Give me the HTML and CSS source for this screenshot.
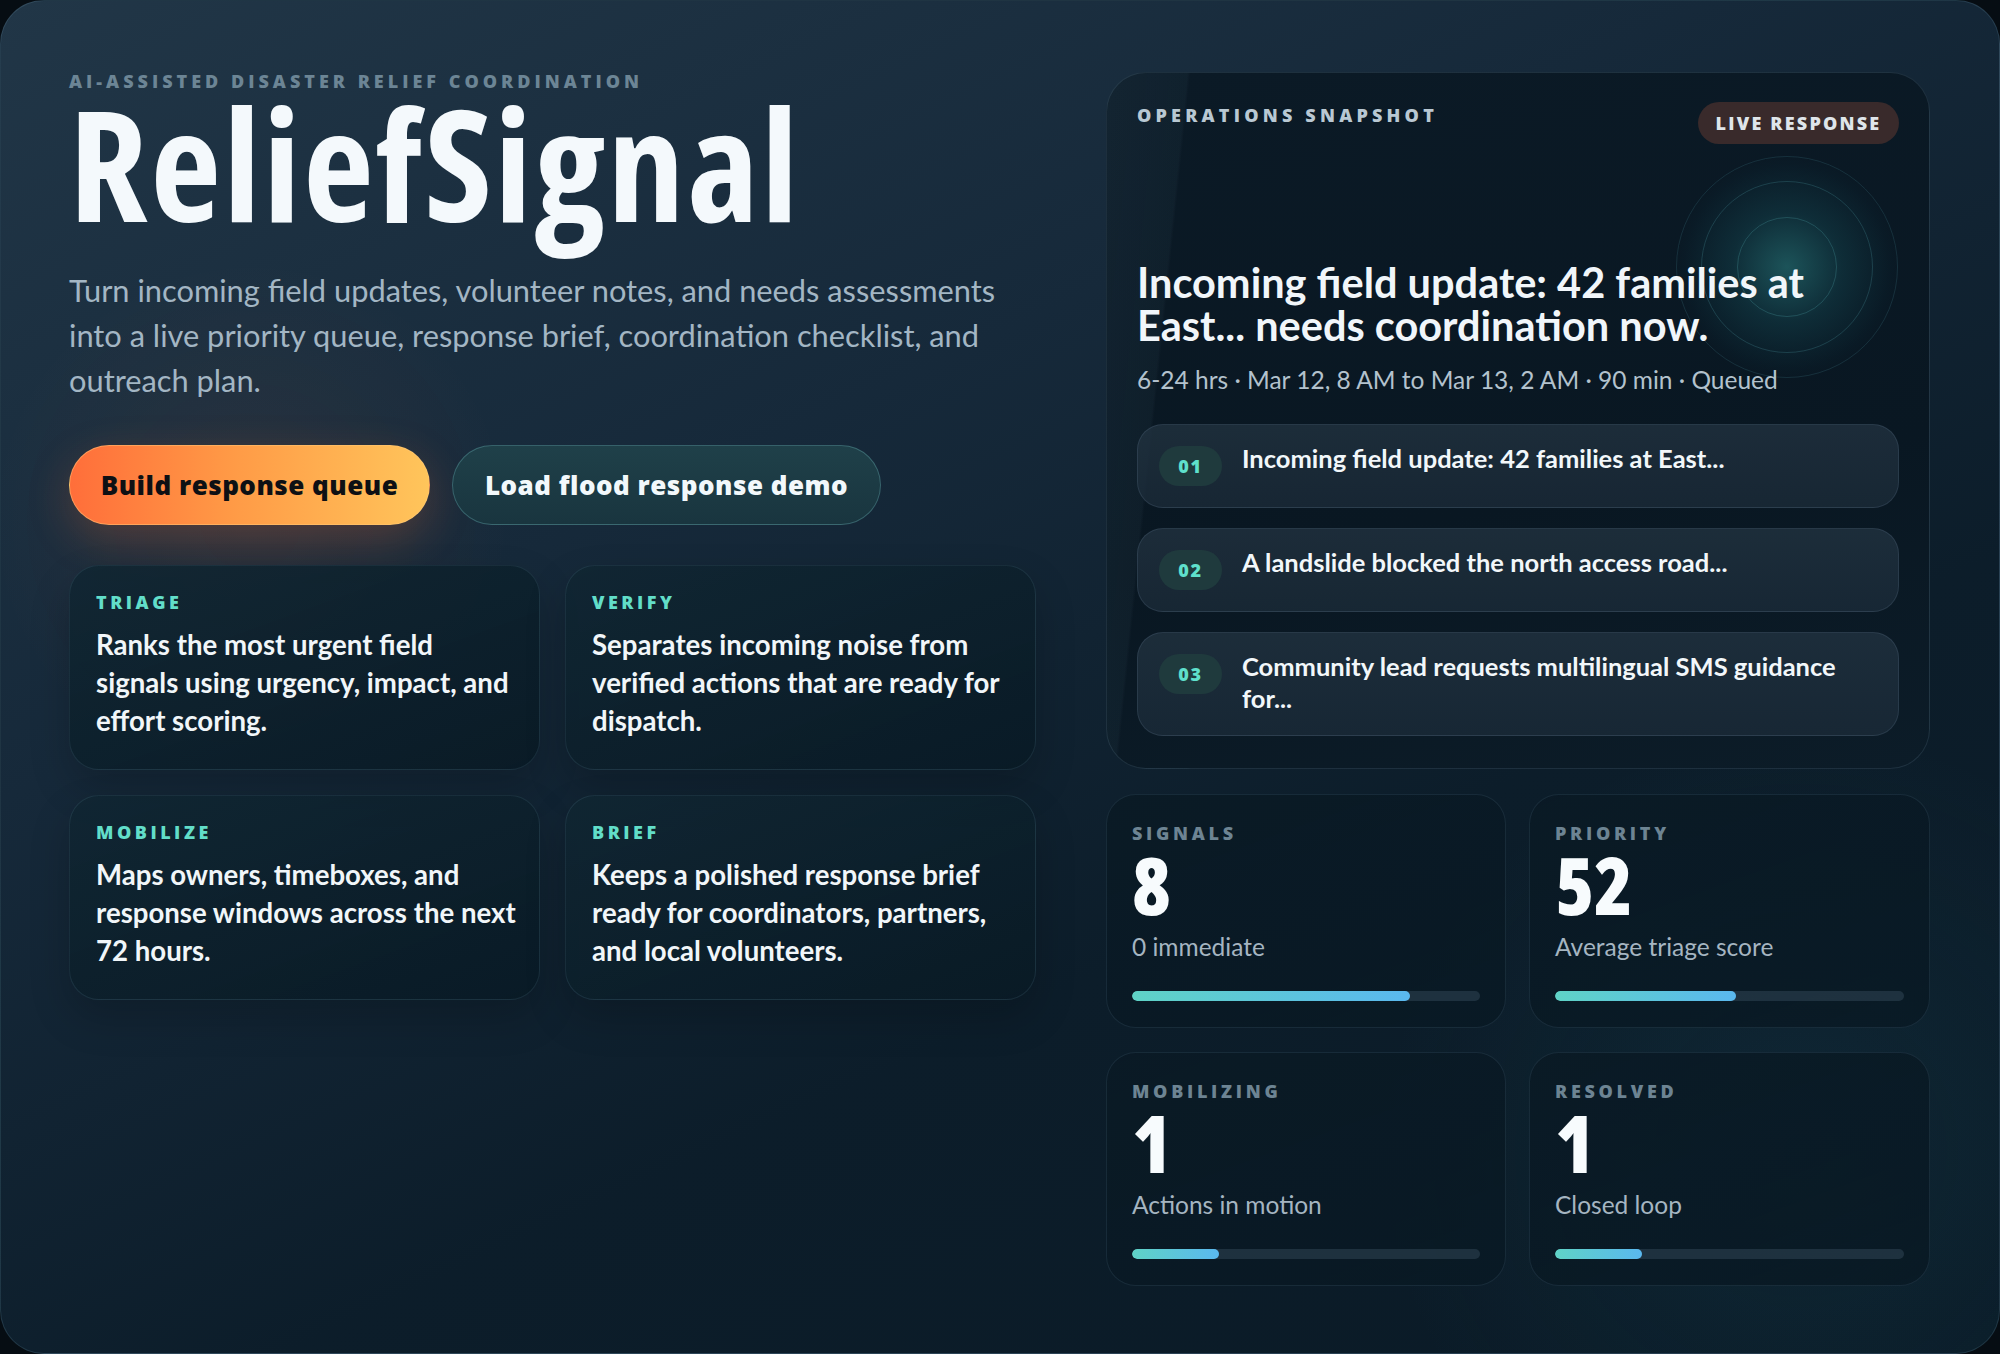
FILE: index.html
```html
<!DOCTYPE html>
<html lang="en">
<head>
<meta charset="utf-8">
<title>ReliefSignal</title>
<link rel="stylesheet" href="styles.css">
</head>
<body>
<main class="frame">
  <section class="intro">
    <p class="eyebrow">AI-assisted disaster relief coordination</p>
    <h1 class="title">ReliefSignal</h1>
    <p class="lede">Turn incoming field updates, volunteer notes, and needs assessments into a live priority queue, response brief, coordination checklist, and outreach plan.</p>
    <div class="actions">
      <button class="btn btn-primary">Build response queue</button>
      <button class="btn btn-secondary">Load flood response demo</button>
    </div>
    <div class="features">
      <article class="feature">
        <h2 class="feature-label">Triage</h2>
        <p class="feature-text">Ranks the most urgent field<br>signals using urgency, impact, and<br>effort scoring.</p>
      </article>
      <article class="feature">
        <h2 class="feature-label">Verify</h2>
        <p class="feature-text">Separates incoming noise from<br>verified actions that are ready for<br>dispatch.</p>
      </article>
      <article class="feature">
        <h2 class="feature-label">Mobilize</h2>
        <p class="feature-text">Maps owners, timeboxes, and<br>response windows across the next<br>72 hours.</p>
      </article>
      <article class="feature">
        <h2 class="feature-label">Brief</h2>
        <p class="feature-text">Keeps a polished response brief<br>ready for coordinators, partners,<br>and local volunteers.</p>
      </article>
    </div>
  </section>

  <aside class="side">
    <section class="snapshot">
      <div class="radar" aria-hidden="true">
        <span class="ring ring-1"></span>
        <span class="ring ring-2"></span>
        <span class="ring ring-3"></span>
      </div>
      <header class="snap-head">
        <p class="snap-label">Operations snapshot</p>
        <span class="pill">Live response</span>
      </header>
      <h2 class="snap-title">Incoming field update: 42 families at<br>East... needs coordination now.</h2>
      <p class="snap-meta">6-24 hrs · Mar 12, 8 AM to Mar 13, 2 AM · 90 min · Queued</p>
      <ol class="queue">
        <li class="queue-item"><span class="badge">01</span><span class="queue-text">Incoming field update: 42 families at East...</span></li>
        <li class="queue-item"><span class="badge">02</span><span class="queue-text">A landslide blocked the north access road...</span></li>
        <li class="queue-item"><span class="badge">03</span><span class="queue-text">Community lead requests multilingual SMS guidance<br>for...</span></li>
      </ol>
    </section>

    <section class="stats">
      <article class="stat">
        <h3 class="stat-label">Signals</h3>
        <p class="stat-value">8</p>
        <p class="stat-sub">0 immediate</p>
        <div class="bar"><span class="fill" style="width:80%"></span></div>
      </article>
      <article class="stat">
        <h3 class="stat-label">Priority</h3>
        <p class="stat-value">52</p>
        <p class="stat-sub">Average triage score</p>
        <div class="bar"><span class="fill" style="width:52%"></span></div>
      </article>
      <article class="stat">
        <h3 class="stat-label">Mobilizing</h3>
        <p class="stat-value">1</p>
        <p class="stat-sub">Actions in motion</p>
        <div class="bar"><span class="fill" style="width:25%"></span></div>
      </article>
      <article class="stat">
        <h3 class="stat-label">Resolved</h3>
        <p class="stat-value">1</p>
        <p class="stat-sub">Closed loop</p>
        <div class="bar"><span class="fill" style="width:25%"></span></div>
      </article>
    </section>
  </aside>
</main>
</body>
</html>
```

FILE: styles.css
```css
* { box-sizing: border-box; }

html, body {
  margin: 0;
  padding: 0;
  background: #060d13;
}

body {
  width: 2000px;
  height: 1354px;
  overflow: hidden;
  font-family: "Lato", "Noto Sans", sans-serif;
  color: #eef5fa;
}

p, h1, h2, h3, ol { margin: 0; padding: 0; }

.frame {
  width: 2000px;
  height: 1354px;
  border-radius: 44px;
  border: 1px solid rgba(120, 165, 190, 0.18);
  background:
    radial-gradient(circle at 250px 520px, rgba(255, 120, 60, 0.07), transparent 260px),
    radial-gradient(circle at 1800px 1150px, rgba(40, 110, 130, 0.14), transparent 420px),
    linear-gradient(155deg, #213647 0%, #16293a 35%, #0c1d2a 65%, #0a1a26 100%);
  display: grid;
  grid-template-columns: 968px 824px;
  column-gap: 69px;
  padding: 70px 0 0 68px;
  overflow: hidden;
}

/* shared label style */
.eyebrow,
.feature-label,
.snap-label,
.pill,
.stat-label,
.badge {
  font-family: "Open Sans", "DejaVu Sans", sans-serif;
  font-weight: 800;
  text-transform: uppercase;
}

/* ---------- left column ---------- */
.eyebrow {
  font-size: 18px;
  line-height: 20px;
  letter-spacing: 4px;
  color: #6c8595;
}

.title {
  font-family: "Open Sans", "Liberation Sans", sans-serif;
  font-stretch: 75%;
  font-size: 154px;
  line-height: 142px;
  font-weight: 700;
  letter-spacing: 2.5px;
  color: #f4f9fc;
}

.lede {
  margin-top: 35px;
  width: 950px;
  font-size: 30.8px;
  line-height: 45px;
  font-weight: 400;
  color: #a3b6c4;
}

.actions {
  margin-top: 42px;
  display: flex;
  gap: 22px;
}

.btn {
  height: 80px;
  border-radius: 40px;
  font-family: "Open Sans", "DejaVu Sans", sans-serif;
  font-size: 26px;
  font-weight: 800;
  letter-spacing: 0.5px;
  padding: 0;
  cursor: pointer;
}

.btn-primary {
  width: 361px;
  border: 1px solid rgba(255, 200, 120, 0.5);
  color: #0e1014;
  background: linear-gradient(90deg, #ff6e3a 0%, #ff9a46 45%, #ffc55b 100%);
  box-shadow: 0 14px 44px rgba(255, 110, 50, 0.22);
}

.btn-secondary {
  width: 429px;
  border: 1px solid rgba(110, 180, 185, 0.35);
  color: #f2f8fb;
  background: linear-gradient(180deg, #1f4049 0%, #19353f 100%);
}

.features {
  margin-top: 40px;
  display: grid;
  grid-template-columns: 471px 471px;
  grid-auto-rows: 205px;
  column-gap: 25px;
  row-gap: 25px;
}

.feature {
  border-radius: 30px;
  border: 1px solid rgba(120, 170, 190, 0.13);
  background: linear-gradient(160deg, rgba(16, 38, 50, 0.85), rgba(9, 26, 37, 0.9));
  box-shadow: 0 18px 40px rgba(0, 0, 0, 0.18);
  padding: 26px 16px 0 26px;
}

.feature-label {
  font-size: 18px;
  line-height: 20px;
  letter-spacing: 3.5px;
  color: #62dec9;
}

.feature-text {
  margin-top: 14px;
  font-size: 27.6px;
  line-height: 38px;
  font-weight: 700;
  white-space: nowrap;
  color: #f1f6f9;
}

/* ---------- right column ---------- */
.side {
  display: flex;
  flex-direction: column;
  gap: 25px;
  margin-top: 1px;
}

.snapshot {
  position: relative;
  height: 697px;
  border-radius: 40px;
  border: 1px solid rgba(130, 170, 195, 0.16);
  background:
    linear-gradient(96deg, rgba(120, 160, 185, 0.08) 0, rgba(120, 160, 185, 0.05) 9%, transparent 9.3%),
    linear-gradient(170deg, #0b1a26 0%, #091722 60%, #0c1c28 100%);
  padding: 29px 30px 0 30px;
  overflow: hidden;
}

.radar {
  position: absolute;
  left: 569px;
  top: 83px;
  width: 222px;
  height: 222px;
  border-radius: 50%;
  background: radial-gradient(circle, rgba(38, 115, 118, 0.65) 0%, rgba(22, 78, 88, 0.38) 35%, rgba(10, 42, 55, 0.15) 65%, transparent 72%);
}

.ring {
  position: absolute;
  border-radius: 50%;
  border: 1.5px solid rgba(70, 140, 150, 0.3);
  left: 50%;
  top: 50%;
  transform: translate(-50%, -50%);
}
.ring-1 { width: 222px; height: 222px; border-color: rgba(70, 130, 145, 0.22); }
.ring-2 { width: 172px; height: 172px; }
.ring-3 { width: 100px; height: 100px; border-color: rgba(70, 150, 155, 0.32); }

.snap-head {
  position: relative;
  display: flex;
  justify-content: space-between;
  align-items: flex-start;
}

.snap-label {
  margin-top: 3px;
  font-size: 18px;
  line-height: 20px;
  letter-spacing: 4.2px;
  color: #b9c8d3;
}

.pill {
  height: 42px;
  width: 201px;
  border-radius: 21px;
  background: #392a2b;
  display: flex;
  align-items: center;
  justify-content: center;
  font-size: 18px;
  letter-spacing: 2.2px;
  color: #dfe5ea;
}

.snap-title {
  position: relative;
  margin-top: 117px;
  font-size: 41.5px;
  line-height: 43px;
  font-weight: 700;
  white-space: nowrap;
  color: #f1f6fa;
}

.snap-meta {
  position: relative;
  margin-top: 18px;
  font-size: 24.5px;
  line-height: 30px;
  color: #b3c2cd;
}

.queue {
  position: relative;
  list-style: none;
  margin-top: 29px;
  display: flex;
  flex-direction: column;
  gap: 20px;
}

.queue-item {
  display: flex;
  align-items: flex-start;
  gap: 20px;
  padding: 21px 30px 21px 21px;
  border-radius: 26px;
  border: 1px solid rgba(140, 170, 195, 0.14);
  background: linear-gradient(180deg, rgba(35, 52, 66, 0.75), rgba(28, 44, 58, 0.75));
}

.badge {
  flex: none;
  width: 63px;
  height: 40px;
  border-radius: 20px;
  background: #1f3a3d;
  display: flex;
  align-items: center;
  justify-content: center;
  font-size: 18px;
  letter-spacing: 1.8px;
  color: #5fe0cc;
}

.queue-text {
  margin-top: -4px;
  font-size: 25.5px;
  line-height: 32px;
  font-weight: 700;
  white-space: nowrap;
  color: #f2f7fa;
}

.stats {
  display: grid;
  grid-template-columns: 400px 401px;
  grid-auto-rows: 234px;
  column-gap: 23px;
  row-gap: 24px;
}

.stat {
  border-radius: 30px;
  border: 1px solid rgba(120, 165, 190, 0.13);
  background: linear-gradient(160deg, rgba(10, 26, 37, 0.9), rgba(9, 25, 36, 0.85));
  padding: 28px 25px 0 25px;
}

.stat-label {
  font-size: 18px;
  line-height: 20px;
  letter-spacing: 3.7px;
  color: #6d8493;
}

.stat-value {
  margin-top: 2px;
  font-family: "Open Sans", "Liberation Sans", sans-serif;
  font-stretch: 75%;
  font-size: 79px;
  line-height: 80px;
  font-weight: 800;
  color: #f7fbfd;
}

.stat-sub {
  margin-top: 7px;
  font-size: 24.5px;
  line-height: 30px;
  color: #a5b5c1;
}

.bar {
  margin-top: 29px;
  height: 10px;
  border-radius: 5px;
  background: rgba(40, 60, 74, 0.7);
  overflow: hidden;
}

.fill {
  display: block;
  height: 100%;
  border-radius: 5px;
  background: linear-gradient(90deg, #5fd3c6 0%, #5ab8ef 100%);
}
```
